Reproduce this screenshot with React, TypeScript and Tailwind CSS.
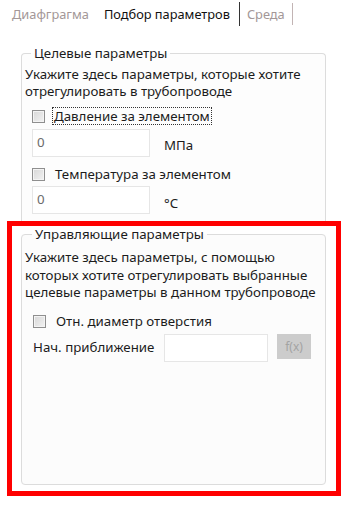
const FONT = "font-['Noto_Sans','Liberation_Sans',sans-serif]";

function CheckBox() {
  return (
    <span className="block w-[13px] h-[13px] shrink-0 border border-[#8f8f8f] bg-[#f4f4f4] p-px">
      <span className="block w-full h-full bg-gradient-to-br from-[#dadada] to-[#f0f0f0]" />
    </span>
  );
}

function TextBox({ value, className }: { value?: string; className: string }) {
  return (
    <div className={`border border-[#e6e6e6] bg-white pl-[4px] pt-[4px] text-[#6b6b6b] ${className}`}>
      {value}
    </div>
  );
}

export default function App() {
  return (
    <div className={`w-[347px] h-[506px] bg-white text-[13.3px] leading-[17px] text-[#1c1c1c] ${FONT}`}>
      {/* tab strip */}
      <div className="h-[28px] flex items-center pl-[12px] text-[12.8px]">
        <span className="text-[#a39797]">Диафграгма</span>
        <span className="ml-[15px] text-[#111]">Подбор параметров</span>
        <span className="ml-[9px] w-px h-[24px] bg-[#333]" />
        <span className="ml-[7px] text-[#a39797]">Среда</span>
        <span className="ml-[7px] w-px h-[22px] bg-[#c2b4b4]" />
      </div>

      {/* Целевые параметры */}
      <fieldset className="mt-[17px] ml-[21px] w-[305px] h-[176px] border border-b-0 border-[#dcdcdc] rounded-t-[4px] px-[3px] bg-[#fdfdfd]">
        <legend className="ml-[6px] px-[3px]">Целевые параметры</legend>
        <p className="mt-[4px]">
          Укажите здесь параметры, которые хотите
          <br />
          отрегулировать в трубопроводе
        </p>
        <div className="mt-[7px] ml-[7px] h-[18px] flex items-center">
          <CheckBox />
          <span className="ml-[7px] px-[1px] border border-dotted border-[#333] leading-[16px]">
            Давление за элементом
          </span>
        </div>
        <div className="mt-[4px] ml-[7px] flex items-center">
          <TextBox value="0" className="w-[118px] h-[28px]" />
          <span className="ml-[14px] mt-[4px]">МПа</span>
        </div>
        <div className="mt-[8px] ml-[7px] h-[18px] flex items-center">
          <CheckBox />
          <span className="ml-[10px]">Температура за элементом</span>
        </div>
        <div className="mt-[3px] ml-[7px] flex items-center">
          <TextBox value="0" className="w-[118px] h-[28px]" />
          <span className="ml-[14px] mt-[6px]">°C</span>
        </div>
      </fieldset>

      {/* highlighted block */}
      <div className="ml-[7px] w-[334px] h-[275px] border-[5px] border-[#ff0000] pl-[9px]">
        <fieldset className="w-[305px] h-[259px] border border-[#dcdcdc] rounded-[4px] px-[3px] bg-[#fcfcfc]">
          <legend className="ml-[7px] px-[3px]">Управляющие параметры</legend>
          <p className="mt-[6px] leading-[17.5px]">
            Укажите здесь параметры, с помощью
            <br />
            которых хотите отрегулировать выбранные
            <br />
            целевые параметры в данном трубопроводе
          </p>
          <div className="mt-[11px] ml-[8px] h-[18px] flex items-center">
            <CheckBox />
            <span className="ml-[10px]">Отн. диаметр отверстия</span>
          </div>
          <div className="mt-[3px] ml-[8px] flex items-start">
            <span className="mt-[5px] w-[131px]">Нач. приближение</span>
            <TextBox className="w-[104px] h-[28px]" />
            <button className="ml-[9px] w-[34px] h-[25px] bg-[#cccccc] text-[#a3a3a3] text-[12px]">
              f(x)
            </button>
          </div>
        </fieldset>
      </div>
    </div>
  );
}
